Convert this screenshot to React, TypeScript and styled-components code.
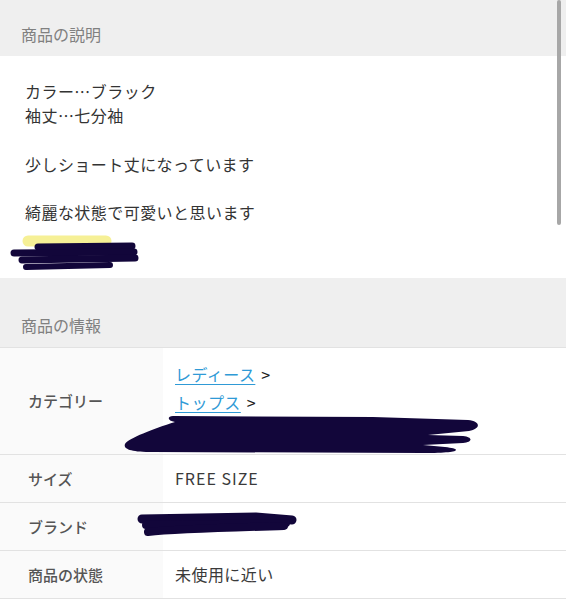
import styled, { createGlobalStyle } from "styled-components";

const GlobalStyle = createGlobalStyle`
    body {
        margin: 0;
        background: #ffffff;
        font-family: "Noto Sans CJK JP", "Noto Sans", sans-serif;
        color: #333333;
    }
`

const Page = styled.div`
    width: 566px;
    margin-top: -13px;
    position: relative;
`

const SectionHeader = styled.div`
    height: 69px;
    box-sizing: border-box;
    background: #efefef;
    display: flex;
    align-items: flex-end;
    padding: 0 0 10px 21px;
    font-size: 16px;
    line-height: 24px;
    color: #808080;
`

const Description = styled.div`
    background: #ffffff;
    padding: 23px 0 1px 25px;
    font-size: 16px;
    letter-spacing: 0.45px;
    line-height: 24.3px;
    color: #333333;
`

const DescLine = styled.div`
    min-height: 24.3px;
    white-space: pre;
`

const Scribble = styled.svg<{ $shiftX: number }>`
    display: block;
    margin-left: ${p => p.$shiftX}px;
    overflow: visible;
`

const DescScribble = styled(Scribble)`
    margin-top: 7px;
`

const InfoTable = styled.div`
    border-top: 1px solid #e2e2e2;
    background: #ffffff;
`

const InfoRow = styled.div`
    display: grid;
    grid-template-columns: 163px 1fr;
    min-height: 47px;
    border-bottom: 1px solid #e2e2e2;
`

const LabelCell = styled.div`
    background: #fafafa;
    display: flex;
    align-items: center;
    padding-left: 28px;
    font-size: 15px;
    font-weight: 500;
    color: #555555;
`

const ValueCell = styled.div<{ $padTop?: number }>`
    display: flex;
    flex-direction: column;
    justify-content: center;
    padding: ${p => p.$padTop ?? 0}px 0 0 12px;
    font-size: 16px;
    letter-spacing: 0.45px;
    color: #3a3a3a;
`

const LatinText = styled.span`
    letter-spacing: 1px;
`

const CrumbLine = styled.div`
    height: 28px;
    line-height: 28px;
    color: #222222;
`

const CrumbLink = styled.a`
    color: #2f9ad6;
    text-decoration: underline;
    text-underline-offset: 3px;
    margin-right: 6px;
`

const ScrollThumb = styled.div`
    position: fixed;
    top: 0;
    right: 5px;
    width: 4px;
    height: 225px;
    border-radius: 2px;
    background: #a7a7a7;
`

const INK = "#12063a"

const descLines = [
    "カラー…ブラック",
    "袖丈…七分袖",
    "",
    "少しショート丈になっています",
    "",
    "綺麗な状態で可愛いと思います",
]

const rows = [
    {label: "サイズ", value: <LatinText>FREE SIZE</LatinText>},
    {label: "ブランド", value: null},
    {label: "商品の状態", value: "未使用に近い"},
]

const BrandMark = () => (
    <Scribble $shiftX={-39} width={166} height={30} viewBox="0 0 166 30">
        <path d="M6 8 L120 6 L156 9" stroke={INK} strokeWidth={9} strokeLinecap="round" fill="none"/>
        <path d="M10 14 L150 12" stroke={INK} strokeWidth={8} strokeLinecap="round" fill="none"/>
        <path d="M12 21 C40 18 80 17 148 15" stroke={INK} strokeWidth={8} strokeLinecap="round" fill="none"/>
    </Scribble>
)

export default function App() {
    return (
        <Page>
            <GlobalStyle/>
            <SectionHeader>商品の説明</SectionHeader>
            <Description>
                {descLines.map((line, i) => <DescLine key={i}>{line}</DescLine>)}
                <DescScribble $shiftX={-17} width={135} height={45} viewBox="0 0 135 45">
                    <path d="M20 9 L98 9" stroke="#f6f096" strokeWidth={11} strokeLinecap="round"/>
                    <path d="M30 15 L124 14" stroke={INK} strokeWidth={7} strokeLinecap="round"/>
                    <path d="M6 21 L126 20" stroke={INK} strokeWidth={7} strokeLinecap="round"/>
                    <path d="M14 28 L127 26" stroke={INK} strokeWidth={7} strokeLinecap="round"/>
                    <path d="M18 35 L102 33" stroke={INK} strokeWidth={6} strokeLinecap="round"/>
                </DescScribble>
            </Description>

            <SectionHeader>商品の情報</SectionHeader>
            <InfoTable>
                <InfoRow>
                    <LabelCell>カテゴリー</LabelCell>
                    <ValueCell $padTop={12}>
                        <CrumbLine><CrumbLink>レディース</CrumbLink>&gt;</CrumbLine>
                        <CrumbLine><CrumbLink>トップス</CrumbLink>&gt;</CrumbLine>
                        <Scribble $shiftX={-52} width={360} height={38} viewBox="0 5 360 38">
                            <path
                                d="M50 5 C44 5 44 10 52 11 C30 18 6 27 2 33 C0 38 8 41 30 41 L300 42
                                   C338 42 340 38 322 36 L300 34 L340 32 C350 31 350 26 340 25
                                   L305 24 L346 20 C358 18 358 10 345 9 L250 6 Z"
                                fill={INK}
                            />
                        </Scribble>
                    </ValueCell>
                </InfoRow>
                {rows.map(row => (
                    <InfoRow key={row.label}>
                        <LabelCell>{row.label}</LabelCell>
                        <ValueCell>{row.value ?? <BrandMark/>}</ValueCell>
                    </InfoRow>
                ))}
            </InfoTable>
            <ScrollThumb/>
        </Page>
    );
}
